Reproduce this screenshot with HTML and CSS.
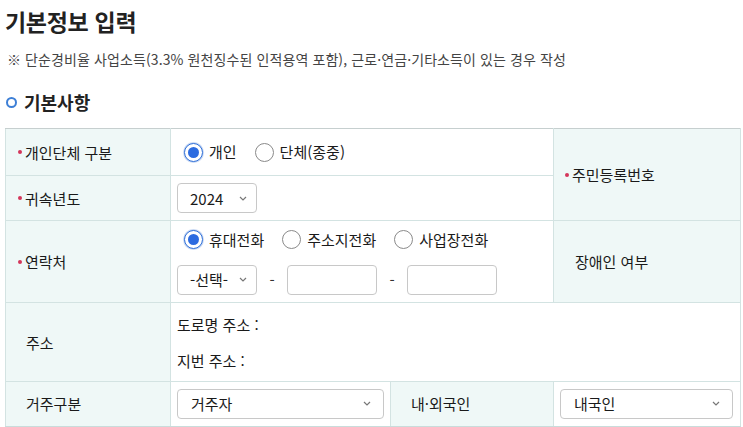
FILE: index.html
```html
<!DOCTYPE html>
<html lang="ko">
<head>
<meta charset="utf-8">
<title>기본정보 입력</title>
<link rel="stylesheet" href="styles.css">
</head>
<body>
<h1 class="title">기본정보 입력</h1>
<p class="note">※ 단순경비율 사업소득(3.3% 원천징수된 인적용역 포함), 근로·연금·기타소득이 있는 경우 작성</p>
<h2 class="section"><span class="ring"></span>기본사항</h2>
<table class="form">
  <colgroup>
    <col class="c1"><col class="c2"><col class="c3"><col class="c4">
  </colgroup>
  <tr class="r1">
    <th class="lab req">개인단체 구분</th>
    <td colspan="2" class="val">
      <div class="radios">
        <label class="radio"><span class="rb on"></span>개인</label>
        <label class="radio"><span class="rb"></span>단체(종중)</label>
      </div>
    </td>
    <th rowspan="2" class="lab req lab-right">주민등록번호</th>
  </tr>
  <tr class="r2">
    <th class="lab req">귀속년도</th>
    <td colspan="2" class="val">
      <div class="sel sel-year"><span>2024</span><svg class="chev" viewBox="0 0 8 5"><path d="M1 1l3 3 3-3" fill="none" stroke="#777" stroke-width="1.2"/></svg></div>
    </td>
  </tr>
  <tr class="r3">
    <th class="lab req">연락처</th>
    <td colspan="2" class="val">
      <div class="radios">
        <label class="radio"><span class="rb on"></span>휴대전화</label>
        <label class="radio"><span class="rb"></span>주소지전화</label>
        <label class="radio"><span class="rb"></span>사업장전화</label>
      </div>
      <div class="phone">
        <div class="sel sel-year"><span>-선택-</span><svg class="chev" viewBox="0 0 8 5"><path d="M1 1l3 3 3-3" fill="none" stroke="#777" stroke-width="1.2"/></svg></div>
        <span class="dash">-</span>
        <span class="inp"></span>
        <span class="dash">-</span>
        <span class="inp"></span>
      </div>
    </td>
    <th class="lab lab-right plain">장애인 여부</th>
  </tr>
  <tr class="r4">
    <th class="lab plain">주소</th>
    <td colspan="3" class="val addr">
      <div class="addr-line">도로명 주소 :</div>
      <div class="addr-line">지번 주소 :</div>
    </td>
  </tr>
  <tr class="r5">
    <th class="lab plain">거주구분</th>
    <td class="val">
      <div class="sel sel-wide"><span>거주자</span><svg class="chev" viewBox="0 0 8 5"><path d="M1 1l3 3 3-3" fill="none" stroke="#777" stroke-width="1.2"/></svg></div>
    </td>
    <th class="lab plain">내·외국인</th>
    <td class="val val-last">
      <div class="sel sel-wide"><span>내국인</span><svg class="chev" viewBox="0 0 8 5"><path d="M1 1l3 3 3-3" fill="none" stroke="#777" stroke-width="1.2"/></svg></div>
    </td>
  </tr>
</table>
</body>
</html>
```
FILE: styles.css
```css
* { box-sizing: border-box; }
html, body { margin: 0; padding: 0; background: #fff; }
body {
  padding: 0 3px 0 5px;
  font-family: "Noto Sans CJK KR", "Noto Sans", sans-serif;
  color: #1a1a1a;
  overflow: hidden;
}
.title {
  margin: 0;
  padding-top: 6px;
  font-size: 23px;
  line-height: 30px;
  font-weight: 700;
  color: #222;
  letter-spacing: -0.3px;
}
.note {
  margin: 13px 0 0 2px;
  font-size: 14px;
  line-height: 20px;
  color: #444;
  letter-spacing: 0.1px;
}
.section {
  margin: 20px 0 0 0;
  display: flex;
  align-items: center;
  gap: 7px;
  font-size: 18px;
  line-height: 26px;
  font-weight: 700;
  color: #222;
}
.ring {
  width: 11px;
  height: 11px;
  border: 2.5px solid #3d7fd6;
  border-radius: 50%;
  margin-left: 1px;
}
.form {
  margin-top: 13px;
  width: 735px;
  border-collapse: collapse;
  table-layout: fixed;
  font-size: 15px;
}
.c1 { width: 165px; }
.c2 { width: 220px; }
.c3 { width: 163px; }
.c4 { width: 187px; }
.form th, .form td {
  border: 1px solid #d3e3e2;
  padding: 0;
}
.form tr:first-child th, .form tr:first-child td { border-top-color: #c6cfcf; }
.form tr:last-child th, .form tr:last-child td { border-bottom: 2px solid #c9dcdb; }
.form .lab {
  background: #eff8f7;
  font-weight: 400;
  text-align: left;
  color: #1a1a1a;
  padding-left: 12px;
}
.form .lab.plain { padding-left: 20px; }
.form .lab-right.plain { padding-left: 21px; }
.form .lab-right.req { padding-left: 11px; }
.lab.req::before {
  content: "";
  display: inline-block;
  width: 4px;
  height: 4px;
  border-radius: 50%;
  background: #d4365a;
  margin-right: 3px;
  vertical-align: middle;
  position: relative;
  top: -2px;
}
.r1 { height: 47px; }
.r2 { height: 45px; }
.r3 { height: 82px; }
.r4 { height: 79px; }
.r5 { height: 45px; }
.form .val { padding-left: 6px; }
.radios {
  display: flex;
  gap: 18px;
  padding-left: 7px;
}
.radio {
  display: flex;
  align-items: center;
  gap: 6px;
  line-height: 22px;
}
.rb {
  width: 19px;
  height: 19px;
  border-radius: 50%;
  border: 1px solid #8a8a8a;
  background: #fff;
  display: inline-flex;
  align-items: center;
  justify-content: center;
  flex: none;
}
.rb.on {
  border: 1.5px solid #2f6fd8;
  box-shadow: 0 0 0 1px #c9d9f3;
}
.rb.on::after {
  content: "";
  width: 11px;
  height: 11px;
  border-radius: 50%;
  background: #2c6be0;
}
.sel {
  display: flex;
  align-items: center;
  justify-content: space-between;
  height: 30px;
  border: 1px solid #c8c8c8;
  border-radius: 4px;
  background: #fff;
  padding: 0 9px 0 12px;
  color: #1a1a1a;
}
.sel-year { width: 80px; }
.sel-wide { width: 207px; padding-left: 13px; padding-right: 12px; }
.val-last .sel-wide { width: 173px; }
.chev { width: 8px; height: 5px; }
.phone {
  display: flex;
  align-items: center;
  margin-top: 14px;
}
.dash { width: 30px; text-align: center; color: #333; }
.inp {
  width: 90px;
  height: 30px;
  border: 1px solid #c8c8c8;
  border-radius: 4px;
  background: #fff;
}
.form .addr { padding-top: 2px; }
.addr-line { line-height: 22px; }
.addr-line + .addr-line { margin-top: 14px; }
```
